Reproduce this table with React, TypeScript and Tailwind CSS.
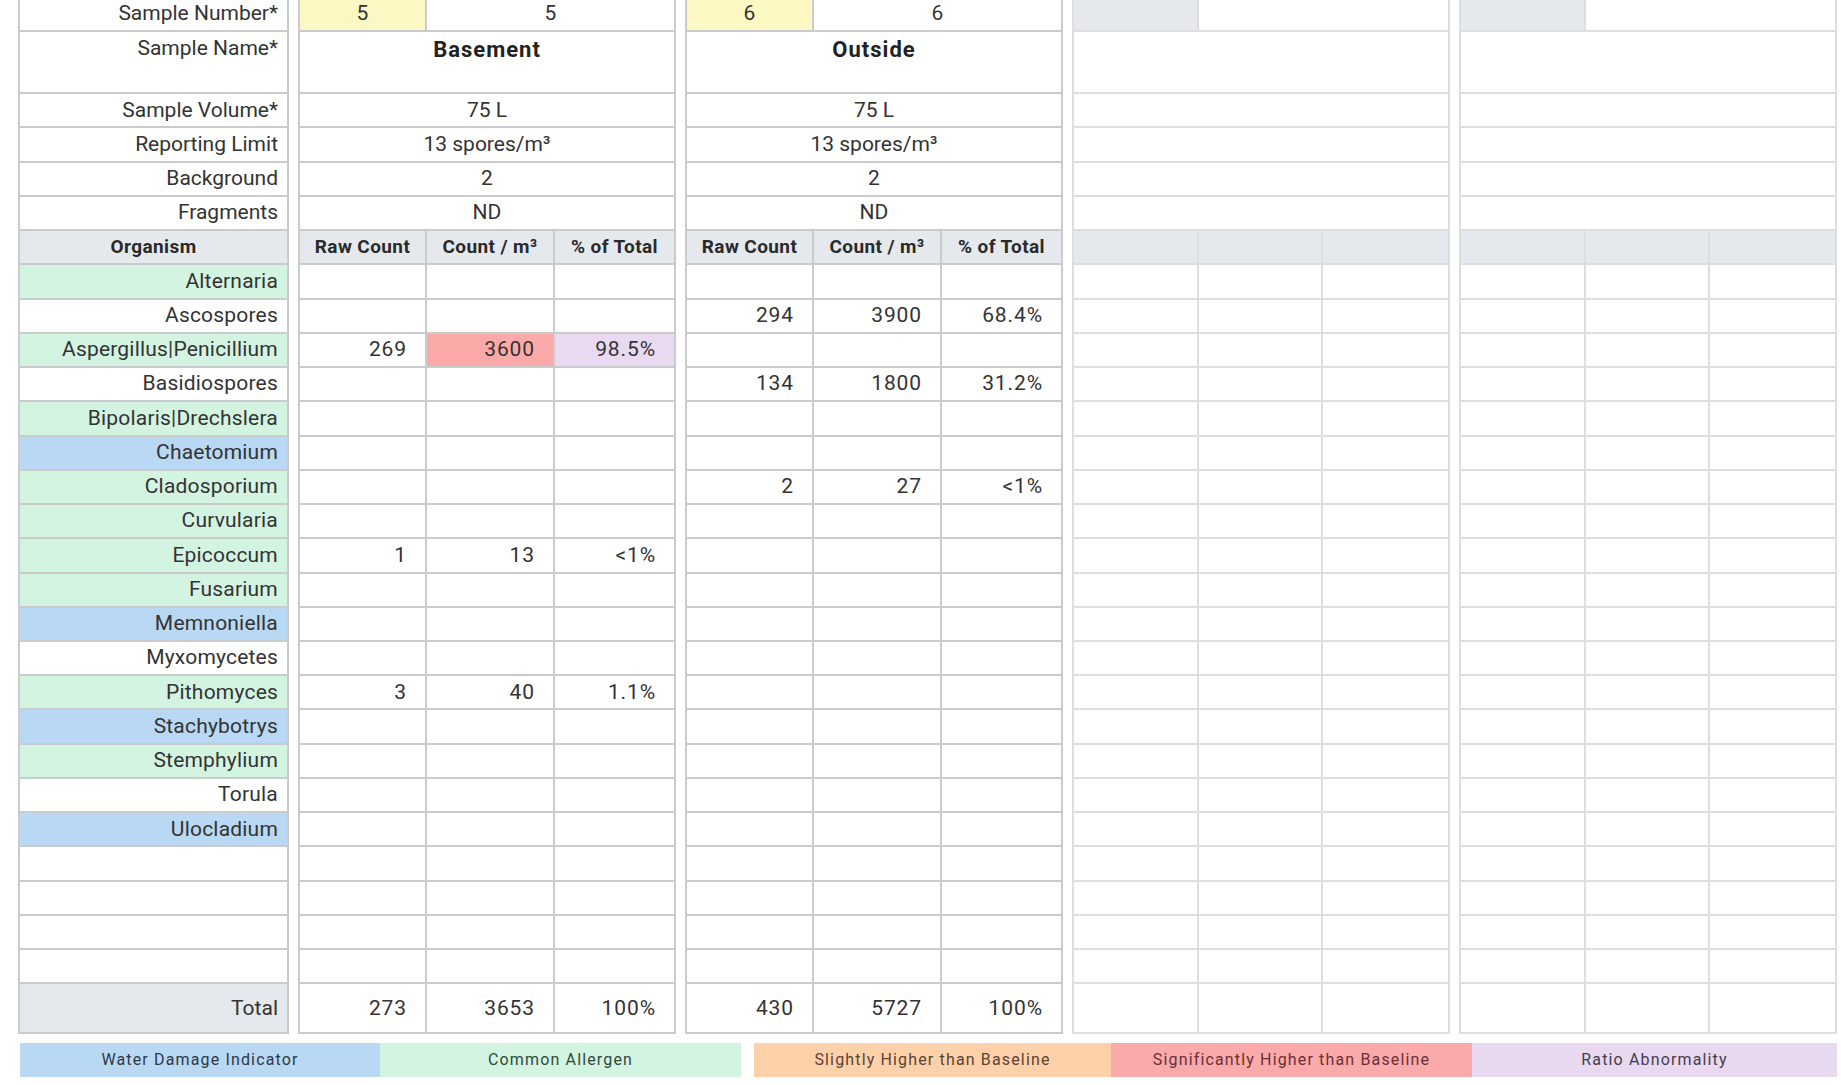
import React from 'react';

type Tone = 'green' | 'blue' | 'white';
type Cell = string | { v: string; bg: string };

const ROW = 'h-[34.24px]';

const toneBg: Record<Tone, string> = {
  green: 'bg-[#d4f4e2]',
  blue: 'bg-[#b9d8f3]',
  white: 'bg-white',
};

const organisms: { name: string; tone: Tone }[] = [
  { name: 'Alternaria', tone: 'green' },
  { name: 'Ascospores', tone: 'white' },
  { name: 'Aspergillus|Penicillium', tone: 'green' },
  { name: 'Basidiospores', tone: 'white' },
  { name: 'Bipolaris|Drechslera', tone: 'green' },
  { name: 'Chaetomium', tone: 'blue' },
  { name: 'Cladosporium', tone: 'green' },
  { name: 'Curvularia', tone: 'green' },
  { name: 'Epicoccum', tone: 'green' },
  { name: 'Fusarium', tone: 'green' },
  { name: 'Memnoniella', tone: 'blue' },
  { name: 'Myxomycetes', tone: 'white' },
  { name: 'Pithomyces', tone: 'green' },
  { name: 'Stachybotrys', tone: 'blue' },
  { name: 'Stemphylium', tone: 'green' },
  { name: 'Torula', tone: 'white' },
  { name: 'Ulocladium', tone: 'blue' },
  { name: '', tone: 'white' },
  { name: '', tone: 'white' },
  { name: '', tone: 'white' },
  { name: '', tone: 'white' },
];

type Sample = {
  num: string;
  name: string;
  counts: Record<string, Cell[]>;
  total: string[];
};

const samples: Sample[] = [
  {
    num: '5',
    name: 'Basement',
    counts: {
      'Aspergillus|Penicillium': ['269', { v: '3600', bg: 'bg-[#fba9a9]' }, { v: '98.5%', bg: 'bg-[#e9daf2]' }],
      Epicoccum: ['1', '13', '<1%'],
      Pithomyces: ['3', '40', '1.1%'],
    },
    total: ['273', '3653', '100%'],
  },
  {
    num: '6',
    name: 'Outside',
    counts: {
      Ascospores: ['294', '3900', '68.4%'],
      Basidiospores: ['134', '1800', '31.2%'],
      Cladosporium: ['2', '27', '<1%'],
    },
    total: ['430', '5727', '100%'],
  },
];

const legend = [
  { label: 'Water Damage Indicator', cls: 'w-[360px] bg-[#b9d8f3] text-[#2c3946]' },
  { label: 'Common Allergen', cls: 'w-[361px] bg-[#d4f4e2] text-[#2f4a3d]' },
  { label: 'Slightly Higher than Baseline', cls: 'ml-[13px] w-[357px] bg-[#fed1aa] text-[#5a4333]' },
  { label: 'Significantly Higher than Baseline', cls: 'w-[361px] bg-[#fbaaac] text-[#6a3036]' },
  { label: 'Ratio Abnormality', cls: 'w-[365px] bg-[#e8d8f0] text-[#443d4f]' },
];

function LabelRow({ children, className = '' }: { children?: React.ReactNode; className?: string }) {
  return (
    <div className={`flex ${ROW} items-center justify-end border-b-2 border-[#c9cbcd] pr-[9px] ${className}`}>
      {children}
    </div>
  );
}

function LabelColumn() {
  return (
    <div className="w-[271px] shrink-0 border-x-2 border-[#c9cbcd]">
      <LabelRow>Sample Number*</LabelRow>
      <div className="h-[62px] border-b-2 border-[#c9cbcd]">
        <div className="flex h-[34px] items-center justify-end pr-[9px]">Sample Name*</div>
      </div>
      <LabelRow>Sample Volume*</LabelRow>
      <LabelRow>Reporting Limit</LabelRow>
      <LabelRow>Background</LabelRow>
      <LabelRow>Fragments</LabelRow>
      <div className={`flex ${ROW} items-center justify-center border-b-2 border-[#c9cbcd] bg-[#e5e9ee] text-[19px] font-bold tracking-[0.4px] text-[#2a2a2a]`}>
        Organism
      </div>
      {organisms.map((o, i) => (
        <LabelRow key={i} className={`tracking-[0.2px] ${toneBg[o.tone]}`}>
          {o.name}
        </LabelRow>
      ))}
      <div className="flex h-[50px] items-center justify-end border-b-2 border-[#c9cbcd] bg-[#e5e9ee] pr-[9px]">Total</div>
    </div>
  );
}

function SampleBlock({ sample }: { sample?: Sample }) {
  const line = sample ? 'border-[#c9cbcd]' : 'border-[#dcdee1]';
  const cols = sample ? 'grid-cols-[127px_128px_1fr]' : 'grid-cols-3';
  const two = sample ? 'grid-cols-[127px_1fr]' : 'grid-cols-[125px_1fr]';

  const wide = (text?: string) => (
    <div className={`flex ${ROW} items-center justify-center border-b-2 ${line}`}>{text}</div>
  );

  const cellOf = (c: Cell | undefined, last: boolean, key: number) => {
    const v = typeof c === 'string' ? c : c?.v;
    const bg = typeof c === 'object' && c ? c.bg : 'bg-white';
    return (
      <div key={key} className={`flex items-center justify-end pr-[18px] tracking-[0.9px] ${bg} ${last ? '' : `border-r-2 ${line}`}`}>
        {v}
      </div>
    );
  };

  return (
    <div className={`w-[378px] shrink-0 border-x-2 ${line}`}>
      <div className={`grid ${two} ${ROW} border-b-2 ${line}`}>
        <div className={`flex items-center justify-center border-r-2 ${line} ${sample ? 'bg-[#fdf8c3]' : 'bg-[#e5e9ee]'}`}>
          {sample?.num}
        </div>
        <div className="flex items-center justify-center">{sample?.num}</div>
      </div>
      <div className={`h-[62px] border-b-2 ${line}`}>
        <div className="flex h-[34px] items-center justify-center text-[22px] font-bold tracking-[1px] text-[#222]">
          {sample?.name}
        </div>
      </div>
      {wide(sample ? '75 L' : '')}
      {wide(sample ? '13 spores/m³' : '')}
      {wide(sample ? '2' : '')}
      {wide(sample ? 'ND' : '')}
      <div className={`grid ${cols} ${ROW} border-b-2 ${line} bg-[#e5e9ee] text-[19px] font-bold tracking-[0.4px] text-[#2a2a2a]`}>
        <div className={`flex items-center justify-center border-r-2 ${line}`}>{sample ? 'Raw Count' : ''}</div>
        <div className={`flex items-center justify-center border-r-2 ${line}`}>{sample ? 'Count / m³' : ''}</div>
        <div className="flex items-center justify-center">{sample ? '% of Total' : ''}</div>
      </div>
      {organisms.map((o, i) => {
        const row = sample && o.name ? sample.counts[o.name] : undefined;
        return (
          <div key={i} className={`grid ${cols} ${ROW} border-b-2 ${line}`}>
            {[0, 1, 2].map((j) => cellOf(row?.[j], j === 2, j))}
          </div>
        );
      })}
      <div className={`grid ${cols} h-[50px] border-b-2 ${line}`}>
        {[0, 1, 2].map((j) => cellOf(sample?.total[j], j === 2, j))}
      </div>
    </div>
  );
}

export default function App() {
  return (
    <div className="h-[1085px] w-[1841px] overflow-hidden bg-white font-['Roboto',sans-serif] text-[21px] text-[#333]">
      <div className="-mt-[2px] flex gap-[9px] pl-[18px]">
        <LabelColumn />
        <SampleBlock sample={samples[0]} />
        <SampleBlock sample={samples[1]} />
        <SampleBlock />
        <SampleBlock />
      </div>
      <div className="mt-[9px] flex pl-[20px]">
        {legend.map((l) => (
          <div key={l.label} className={`flex h-[34px] items-center justify-center text-[16px] tracking-[1.15px] ${l.cls}`}>
            {l.label}
          </div>
        ))}
      </div>
    </div>
  );
}
